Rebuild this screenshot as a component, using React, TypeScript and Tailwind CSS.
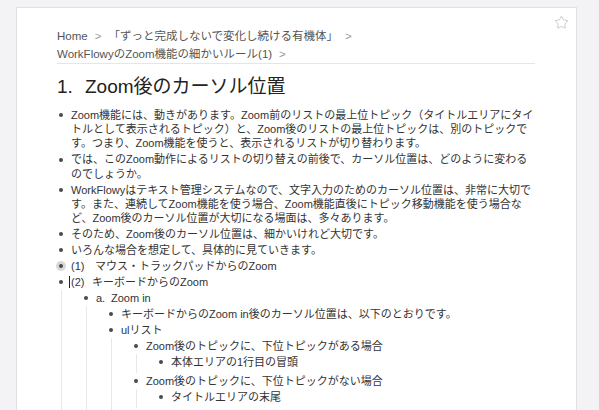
import { Star } from "lucide-react";

type Node = {
	lines: string[];
	marker?: string;
	markerWidth?: string;
	highlight?: boolean;
	cursor?: boolean;
	children?: Node[];
};

const outline: Node[] = [
	{
		lines: [
			"Zoom機能には、動きがあります。Zoom前のリストの最上位トピック（タイトルエリアにタイ",
			"トルとして表示されるトピック）と、Zoom後のリストの最上位トピックは、別のトピックで",
			"す。つまり、Zoom機能を使うと、表示されるリストが切り替わります。",
		],
	},
	{
		lines: [
			"では、このZoom動作によるリストの切り替えの前後で、カーソル位置は、どのように変わる",
			"のでしょうか。",
		],
	},
	{
		lines: [
			"WorkFlowyはテキスト管理システムなので、文字入力のためのカーソル位置は、非常に大切で",
			"す。また、連続してZoom機能を使う場合、Zoom機能直後にトピック移動機能を使う場合な",
			"ど、Zoom後のカーソル位置が大切になる場面は、多々あります。",
		],
	},
	{ lines: ["そのため、Zoom後のカーソル位置は、細かいけれど大切です。"] },
	{ lines: ["いろんな場合を想定して、具体的に見ていきます。"] },
	{ marker: "(1)", markerWidth: "w-[24px]", lines: ["マウス・トラックパッドからのZoom"], highlight: true },
	{
		marker: "(2)",
		markerWidth: "w-[21px]",
		lines: ["キーボードからのZoom"],
		cursor: true,
		children: [
			{
				marker: "a.",
				markerWidth: "w-[15px]",
				lines: ["Zoom in"],
				children: [
					{ lines: ["キーボードからのZoom in後のカーソル位置は、以下のとおりです。"] },
					{
						lines: ["ulリスト"],
						children: [
							{
								lines: ["Zoom後のトピックに、下位トピックがある場合"],
								children: [{ lines: ["本体エリアの1行目の冒頭"] }],
							},
							{
								lines: ["Zoom後のトピックに、下位トピックがない場合"],
								children: [{ lines: ["タイトルエリアの末尾"] }],
							},
						],
					},
				],
			},
		],
	},
];

function OutlineItem({ node }: { node: Node }) {
	return (
		<div>
			<div className="flex items-start py-[0.85px]">
				{/* bullet */}
				<span className="w-[10px] h-[14.3px] shrink-0 flex items-center justify-center">
					{node.highlight ? (
						<span className="w-[10px] h-[10px] rounded-full bg-[#d8d8d8] flex items-center justify-center">
							<span className="w-[4px] h-[4px] rounded-full bg-[#4a4a4a]" />
						</span>
					) : (
						<span className="w-[4px] h-[4px] rounded-full bg-[#4a4a4a]" />
					)}
				</span>
				<div className="ml-[5px] flex items-start">
					{node.cursor && <span className="w-px h-[12px] mt-[1px] bg-[#222] -ml-[2px] mr-[1px]" />}
					{node.marker && <span className={`${node.markerWidth} shrink-0`}>{node.marker}</span>}
					<div>
						{node.lines.map((line) => (
							<div key={line} className="whitespace-nowrap">
								{line}
							</div>
						))}
					</div>
				</div>
			</div>
			{node.children && (
				<div className="ml-[5px] border-l border-[#e8e8e8] pl-[19px] pb-[3px]">
					{node.children.map((child) => (
						<OutlineItem key={child.lines[0]} node={child} />
					))}
				</div>
			)}
		</div>
	);
}

export default function App() {
	return (
		<div className="min-h-screen h-[410px] overflow-hidden bg-[#f3f3f5] pt-[7px] pl-[16px] font-['Liberation_Sans','Noto_Sans_CJK_JP',sans-serif] text-[#333]">
			<div className="relative w-[561px] h-[500px] bg-white border border-[#e0e0e0] pl-[40px] pt-[20px]">
				{/* Star */}
				<Star
					size={15}
					strokeWidth={1.2}
					className="absolute top-[7px] right-[7px] text-[#b8b8b8]"
				/>

				{/* Breadcrumb */}
				<div className="w-[478px] border-b border-[#e6e6e6] text-[11.5px] leading-[17.5px] text-[#555]">
					<div className="flex items-center whitespace-nowrap">
						<span>Home</span>
						<span className="mx-[7px] text-[#999]">&gt;</span>
						<span>「ずっと完成しないで変化し続ける有機体」</span>
						<span className="mx-[7px] text-[#999]">&gt;</span>
					</div>
					<div className="flex items-center whitespace-nowrap">
						<span>WorkFlowyのZoom機能の細かいルール(1)</span>
						<span className="mx-[7px] text-[#999]">&gt;</span>
					</div>
				</div>

				{/* Title */}
				<h1 className="mt-[11px] flex text-[19px] leading-[24px] text-[#222]">
					<span className="w-[28px] shrink-0">1.</span>
					<span>Zoom後のカーソル位置</span>
				</h1>

				{/* Outline */}
				<div className="mt-[8px] -ml-[1px] text-[11px] leading-[14.3px] text-[#333]">
					{outline.map((node) => (
						<OutlineItem key={node.lines[0]} node={node} />
					))}
				</div>
			</div>
		</div>
	);
}
